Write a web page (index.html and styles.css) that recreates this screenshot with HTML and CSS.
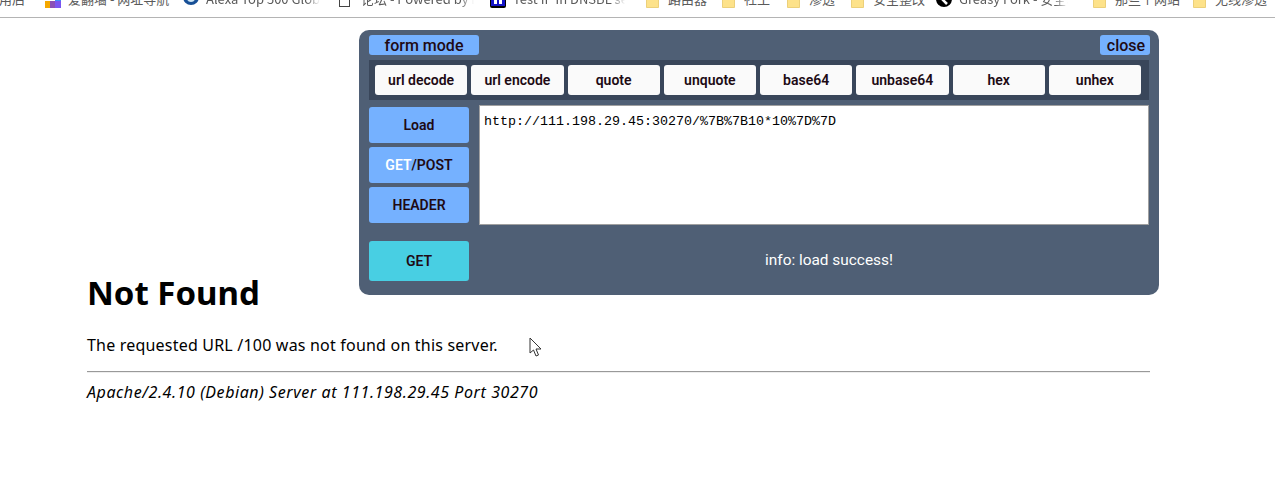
FILE: index.html
```html
<!DOCTYPE html>
<html lang="en">
<head>
    <meta charset="UTF-8">
    <title>404 Not Found</title>
    <link rel="stylesheet" href="styles.css">
</head>
<body>
    <div class="bookmarks">
        <span class="mark mark-first">用后</span>
        <span class="mark mark-hao"><svg class="ico" viewBox="0 0 16 16"><rect x="0" y="9" width="5" height="7" fill="#f5a800"/><rect x="5" y="9" width="5" height="7" fill="#8a4fb5"/><rect x="10" y="9" width="6" height="7" fill="#7a55f0"/><rect x="10" y="2" width="6" height="7" fill="#3f8df5"/></svg>爱翻墙 - 网址导航</span>
        <span class="mark mark-alexa"><svg class="ico" viewBox="0 0 16 16"><circle cx="8" cy="5" r="8" fill="#174f96"/><circle cx="8" cy="6" r="4" fill="#cfe6f5"/></svg><span class="fade fade-alexa">Alexa Top 500 Global Sites</span></span>
        <span class="mark mark-doc"><svg class="ico" viewBox="0 0 16 16"><rect x="1.5" y="0.5" width="10" height="14" fill="#fff" stroke="#444"/></svg><span class="fade fade-doc">论坛 - Powered by Discuz!</span></span>
        <span class="mark mark-tip"><svg class="ico" viewBox="0 0 16 16"><rect width="16" height="16" rx="2" fill="#000"/><rect x="1" y="0" width="14" height="14" fill="#1414c8"/><rect x="4" y="0" width="3" height="12" fill="#fff"/><rect x="9" y="0" width="3" height="12" fill="#fff"/></svg><span class="fade fade-tip">Test IP in DNSBL services</span></span>
        <span class="mark mark-router"><svg class="ico" viewBox="0 0 16 16"><use href="#folder"/></svg>路由器</span>
        <span class="mark mark-social"><svg class="ico" viewBox="0 0 16 16"><use href="#folder"/></svg>社工</span>
        <span class="mark mark-pen"><svg class="ico" viewBox="0 0 16 16"><use href="#folder"/></svg>渗透</span>
        <span class="mark mark-safe"><svg class="ico" viewBox="0 0 16 16"><use href="#folder"/></svg>安全整改</span>
        <span class="mark mark-fork"><svg class="ico" viewBox="0 0 16 16"><circle cx="8" cy="7" r="8" fill="#000"/><path d="M5 6l6 6" stroke="#fff" stroke-width="2.5"/></svg><span class="fade fade-fork">Greasy Fork - 安全、有用的</span></span>
        <span class="mark mark-sites"><svg class="ico" viewBox="0 0 16 16"><use href="#folder"/></svg>那些个网站</span>
        <span class="mark mark-wifi"><svg class="ico" viewBox="0 0 16 16"><use href="#folder"/></svg>无线渗透</span>
        <svg class="defs" width="0" height="0"><defs><g id="folder"><path d="M1.5 0h4l2 2h6v13.5h-12z" fill="#fde28a" stroke="#ecd07a" stroke-width="1"/></g></defs></svg>
    </div>

    <div class="hackbar">
        <div class="bar-top">
            <button class="tab tab-mode">form mode</button>
            <button class="tab tab-close">close</button>
        </div>
        <div class="tools">
            <button class="tool">url decode</button>
            <button class="tool">url encode</button>
            <button class="tool">quote</button>
            <button class="tool">unquote</button>
            <button class="tool">base64</button>
            <button class="tool">unbase64</button>
            <button class="tool">hex</button>
            <button class="tool">unhex</button>
        </div>
        <div class="bar-main">
            <div class="side">
                <button class="act">Load</button>
                <button class="act"><span class="on">GET</span>/POST</button>
                <button class="act">HEADER</button>
            </div>
            <div class="url">http://111.198.29.45:30270/%7B%7B10*10%7D%7D</div>
        </div>
        <div class="bar-foot">
            <button class="send">GET</button>
            <div class="info">info: load success!</div>
        </div>
    </div>

    <div class="page">
        <h1>Not Found</h1>
        <p>The requested URL /100 was not found on this server.</p>
        <hr>
        <address>Apache/2.4.10 (Debian) Server at 111.198.29.45 Port 30270</address>
    </div>

    <svg class="cursor" width="14" height="21" viewBox="0 0 14 21"><path d="M1 1v15l3.5-3 2.5 6 2.5-1-2.5-6h5z" fill="#fff" stroke="#333" stroke-width="1"/></svg>
</body>
</html>
```

FILE: styles.css
```css
html, body{
    margin: 0;
    background: #fff;
}

body{
    font-family: "Noto Sans", "Open Sans", sans-serif;
    color: #000;
    height: 498px;
    overflow: hidden;
}

.bookmarks{
    height: 17px;
    border-bottom: 1px solid #b4b4b4;
    overflow: hidden;
    display: flex;
    align-items: flex-end;
    font-family: "Noto Sans CJK SC", "Liberation Sans", sans-serif;
    font-size: 13px;
    line-height: 16px;
    color: #5a5a5a;
}

.mark{
    display: flex;
    align-items: center;
    gap: 7px;
    white-space: nowrap;
    overflow: hidden;
    flex: none;
    height: 16px;
    padding-bottom: 10px;
}

.ico{
    width: 16px;
    height: 16px;
    margin-top: 2px;
    flex: none;
}

.fade{
    overflow: hidden;
    -webkit-mask-image: linear-gradient(90deg, #000 88%, transparent);
    mask-image: linear-gradient(90deg, #000 88%, transparent);
}

.fade-alexa{ width: 114px; }
.fade-doc{ width: 113px; }
.fade-tip{ width: 112px; }
.fade-fork{ width: 109px; }

.mark-first{ width: 46px; margin-left: -1px; }
.mark-hao{ width: 138px; }
.mark-alexa{ width: 155px; }
.mark-doc{ width: 152px; }
.mark-tip{ width: 155px; }
.mark-router{ width: 76px; }
.mark-social{ width: 65px; }
.mark-pen{ width: 64px; }
.mark-safe{ width: 86px; }
.mark-fork{ width: 156px; }
.mark-sites{ width: 100px; }
.mark-wifi{ width: 83px; }

.defs{
    position: absolute;
}

.hackbar{
    position: absolute;
    left: 359px;
    top: 30px;
    width: 800px;
    height: 265px;
    box-sizing: border-box;
    padding: 5px 10px 0 10px;
    background: #4f5f75;
    border-radius: 10px;
    font-family: Roboto, "Liberation Sans", sans-serif;
}

button{
    font-family: inherit;
    border: none;
    padding: 0;
    cursor: pointer;
    color: #200a14;
}

.bar-top{
    display: flex;
    justify-content: space-between;
    margin-right: -1px;
}

.tab{
    height: 20px;
    background: #75b1ff;
    border-radius: 3px;
    font-size: 16px;
    font-weight: 500;
}

.tab-mode{
    width: 110px;
}

.tab-close{
    width: 50px;
    padding-left: 2px;
}

.tools{
    display: flex;
    gap: 4px;
    margin-top: 5px;
    padding: 5px 8px 5px 6px;
    background: #39465a;
}

.tool{
    flex: 1;
    height: 30px;
    background: #fafafa;
    border-radius: 3px;
    font-size: 14px;
    font-weight: 600;
}

.bar-main{
    display: flex;
    gap: 10px;
    margin-top: 5px;
}

.side{
    display: flex;
    flex-direction: column;
    gap: 4px;
    margin-top: 2px;
    width: 100px;
    flex: none;
}

.act{
    height: 36px;
    background: #75b1ff;
    border-radius: 3px;
    font-size: 14px;
    font-weight: 600;
}

.on{
    color: #fff;
}

.url{
    flex: 1;
    height: 105px;
    border: 1px solid #a0a0a0;
    background: #fff;
    padding: 7px 4px 6px;
    font-family: "Liberation Mono", monospace;
    font-size: 13.33px;
    line-height: 18px;
    color: #000;
}

.bar-foot{
    display: flex;
    gap: 10px;
    margin-top: 16px;
}

.send{
    width: 100px;
    height: 40px;
    background: #48cfe3;
    border-radius: 3px;
    font-size: 14px;
    font-weight: 600;
}

.info{
    flex: 1;
    color: #fff;
    font-size: 15.4px;
    line-height: 38px;
    text-align: center;
    padding-left: 30px;
}

.page{
    padding: 0 125px 0 87px;
    margin-top: 253px;
}

h1{
    font-size: 33px;
    font-weight: 700;
    line-height: 44px;
    margin: 0 0 19px;
}

p{
    font-size: 16px;
    line-height: 22px;
    margin: 0 0 15px;
    letter-spacing: 0.2px;
}

hr{
    margin: 0;
    border: none;
    border-top: 1px solid #999;
    border-bottom: 1px solid #eee;
}

address{
    font-size: 16px;
    line-height: 22px;
    margin-top: 8px;
    letter-spacing: 0.57px;
}

.cursor{
    position: absolute;
    left: 529px;
    top: 337px;
}
```
